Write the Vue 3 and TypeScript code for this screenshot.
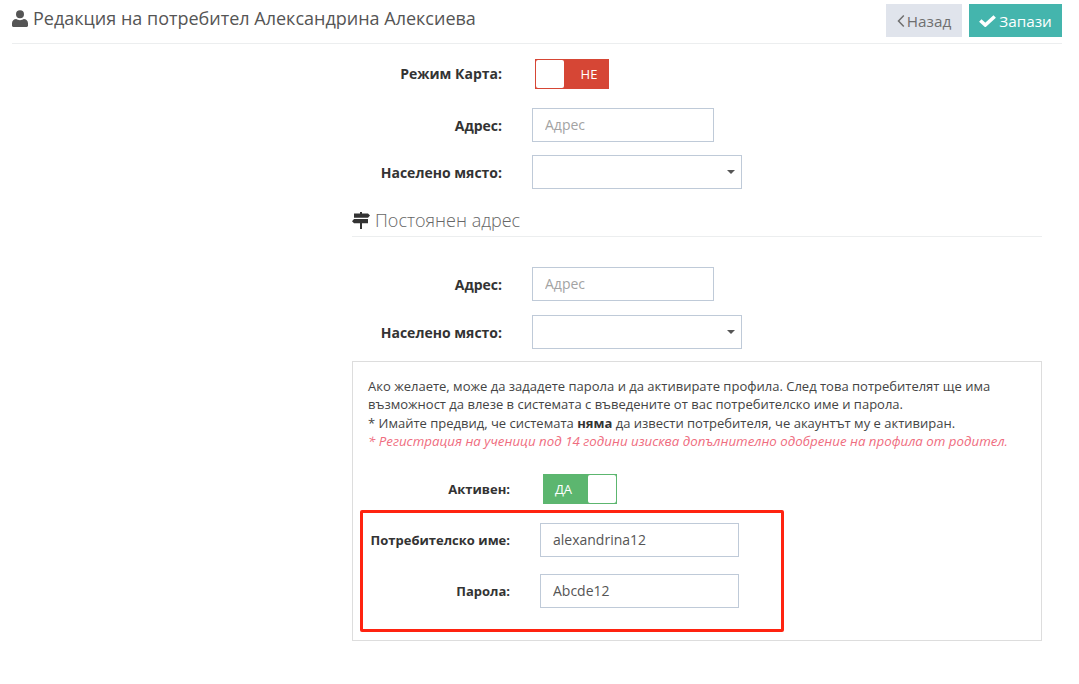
<script setup lang="ts">
const userIcon = 'M8 8.2a4 4 0 1 0 0-8 4 4 0 0 0 0 8Zm-8 7.6v-2.6c0-2.5 1.900-4.200 4.300-4.200.9.700 2.300 1.200 3.700 1.200s2.800-.5 3.700-1.200c2.400 0 4.300 1.700 4.300 4.200v2.600c0 .7-.6 1.200-1.300 1.200H1.300C.6 17 0 16.500 0 15.800Z'
</script>

<template>
  <div class="page">
    <header class="top">
      <h1 class="title">
        <svg class="user" viewBox="0 0 16 17" aria-hidden="true"><path :d="userIcon" /></svg>
        Редакция на потребител Александрина Алексиева
      </h1>
      <div class="actions">
        <button class="btn back" type="button">
          <svg viewBox="0 0 8 14" width="8" height="14" aria-hidden="true"><path d="M6.800 1.500 1.500 7l5.300 5.500" fill="none" stroke="currentColor" stroke-width="1.500" /></svg>
          Назад
        </button>
        <button class="btn save" type="button">
          <svg viewBox="0 0 17 12" width="17" height="12" aria-hidden="true"><path d="M1.300 5.500 6.300 10 15.700 1.500" fill="none" stroke="currentColor" stroke-width="3.600" /></svg>
          Запази
        </button>
      </div>
    </header>

    <main class="form">
      <div class="row first">
        <label class="lbl">Режим Карта:</label>
        <div class="toggle off">
          <span class="knob"></span>
          <span class="state">НЕ</span>
        </div>
      </div>
      <div class="row r2">
        <label class="lbl">Адрес:</label>
        <input class="inp short" placeholder="Адрес" />
      </div>
      <div class="row r3">
        <label class="lbl">Населено място:</label>
        <div class="sel"><i class="caret"></i></div>
      </div>

      <h2 class="section">
        <svg class="sign" viewBox="0 0 18 17" aria-hidden="true">
          <path d="M8 0h2v1.500h6l2 2-2 2.300H2V1.500h6V0ZM2 7h14v4.300H10V17H8v-5.700H2L0 9.200 2 7Z" />
        </svg>
        Постоянен адрес
      </h2>

      <div class="row r4">
        <label class="lbl">Адрес:</label>
        <input class="inp short" placeholder="Адрес" />
      </div>
      <div class="row r3b">
        <label class="lbl">Населено място:</label>
        <div class="sel"><i class="caret"></i></div>
      </div>

      <section class="box">
        <p class="note">
          Ако желаете, може да зададете парола и да активирате профила. След това потребителят ще има<br />
          възможност да влезе в системата с въведените от вас потребителско име и парола.<br />
          * Имайте предвид, че системата <b>няма</b> да извести потребителя, че акаунтът му е активиран.<br />
          <em>* Регистрация на ученици под 14 години изисква допълнително одобрение на профила от родител.</em>
        </p>
        <div class="brow active">
          <label class="lbl wide">Активен:</label>
          <div class="toggle on">
            <span class="state">ДА</span>
            <span class="knob"></span>
          </div>
        </div>
        <div class="brow user-row">
          <label class="lbl wide">Потребителско име:</label>
          <input class="inp long" value="alexandrina12" />
        </div>
        <div class="brow pass-row">
          <label class="lbl wide">Парола:</label>
          <input class="inp long" value="Abcde12" />
        </div>
        <div class="mark"></div>
      </section>
    </main>
  </div>
</template>

<style>
html, body { margin: 0; background: #fff; }
</style>

<style scoped>
.page {
  width: 1079px;
  height: 684px;
  overflow: hidden;
  box-sizing: border-box;
  font-family: "Open Sans", sans-serif;
  color: #333;
  background: #fff;
}
.top {
  margin: 0 17px 0 12px;
  height: 44px;
  box-sizing: border-box;
  border-bottom: 1px solid #eceeef;
  display: flex;
  justify-content: space-between;
}
.title {
  margin: 7px 0 0;
  font-size: 18px;
  line-height: 22px;
  font-weight: 400;
  color: #555;
  display: flex;
  align-items: center;
  height: 22px;
  gap: 5px;
}
.user { width: 16px; height: 17px; fill: #555; margin-top: 1px; }
.actions { display: flex; gap: 7px; padding-top: 4px; }
.btn {
  height: 33px;
  border: 0;
  font: 400 15.300px "Open Sans", sans-serif;
  display: flex;
  align-items: center;
  justify-content: center;
  gap: 2px;
  padding: 0;
}
.back { width: 76px; background: #e0e4ec; color: #6f6f6f; }
.save { width: 93px; background: #44b5ad; color: #fff; gap: 3px; }

.form { margin-left: 352px; width: 690px; }
.row { display: flex; align-items: center; }
.lbl {
  width: 150px;
  text-align: right;
  font-size: 14px;
  font-weight: 700;
  color: #333;
  flex: none;
}
.row .lbl { margin-right: 30px; }
.first { margin-top: 15px; height: 30px; }
.first .lbl { margin-right: 33px; margin-bottom: 2px; }
.r2 { margin-top: 19px; }
.r3 { margin-top: 13px; }
.r4 { margin-top: 30px; }
.r3b { margin-top: 14px; }

.inp, .sel {
  height: 34px;
  box-sizing: border-box;
  border: 1px solid #bfcad8;
  background: #fff;
  flex: none;
}
.inp {
  padding: 0 12px 2px;
  font: 400 14px "Open Sans", sans-serif;
  color: #555;
  outline: none;
  border-radius: 0;
}
.inp::placeholder { color: #a3a3a3; opacity: 1; }
.short { width: 182px; }
.long { width: 199px; }
.sel { width: 210px; position: relative; }
.caret {
  position: absolute;
  right: 6px;
  top: 14px;
  border-left: 4px solid transparent;
  border-right: 4px solid transparent;
  border-top: 4px solid #555;
}

.section {
  margin: 19px 0 0;
  height: 29px;
  box-sizing: border-box;
  border-bottom: 1px solid #eceeef;
  font-size: 18px;
  line-height: 24px;
  font-weight: 300;
  color: #666;
  display: flex;
  align-items: flex-start;
  gap: 5px;
}
.sign { width: 18px; height: 17px; fill: #333; margin-top: 4px; }

.toggle {
  width: 74px;
  height: 30px;
  box-sizing: border-box;
  display: flex;
  align-items: center;
  color: #fff;
  font-size: 13px;
  padding: 1px;
  flex: none;
}
.knob { width: 28px; height: 28px; background: #fff; border-radius: 2px; flex: none; }
.state { flex: 1; text-align: center; }
.off { background: #d64635; }
.on { background: #5cb66f; }
.on .state { padding-right: 5px; }
.off .state { padding-left: 6px; }

.box {
  position: relative;
  margin-top: 12px;
  height: 280px;
  box-sizing: border-box;
  border: 1px solid #dddddd;
  padding: 15px 15px 0;
}
.note {
  margin: 0;
  font-size: 13px;
  line-height: 18.300px;
  color: #444;
  white-space: nowrap;
}
.note b { color: #333; }
.note em { color: #ef6d80; font-size: 13.300px; }
.brow { display: flex; align-items: center; margin-left: -15px; }
.wide { width: 157px; margin-right: 30px; font-size: 13px; }
.active { margin-top: 24px; }
.active .wide { margin-right: 33px; }
.user-row { margin-top: 19px; }
.pass-row { margin-top: 17px; }
.mark {
  position: absolute;
  left: 7px;
  top: 148px;
  width: 424px;
  height: 122px;
  box-sizing: border-box;
  border: 3px solid #ff2310;
  border-radius: 2px;
  pointer-events: none;
}
</style>
